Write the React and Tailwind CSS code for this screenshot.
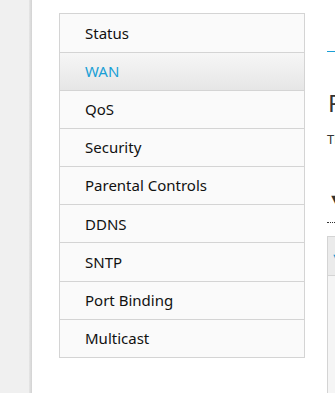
const menuItems = [
  "Status",
  "WAN",
  "QoS",
  "Security",
  "Parental Controls",
  "DDNS",
  "SNTP",
  "Port Binding",
  "Multicast",
];

const App = () => {
  const active = "WAN";

  return (
    <div
      className="flex h-[393px] w-[335px] overflow-hidden bg-[#f0f0f0]"
      style={{ fontFamily: '"Noto Sans", "Open Sans", sans-serif' }}
    >
      {/* left rail */}
      <div className="w-[29px] shrink-0 bg-[#f0f0f0]" />
      <div className="w-[3px] shrink-0 bg-gradient-to-r from-[#e6e6e6] to-[#d2d2d2]" />

      {/* main panel */}
      <div className="flex flex-1 min-w-0 bg-white pl-[27px] pt-[13px] gap-[22px]">
        {/* side menu */}
        <div className="w-[246px] shrink-0 self-start border border-[#d4d4d4]">
          {menuItems.map((item, i) => (
            <div
              key={item}
              className={`flex items-center pl-[25px] text-[15px] ${
                i > 0 ? "h-[38.2px] border-t border-[#d4d4d4]" : "h-[37.5px]"
              } ${
                item === active
                  ? "bg-gradient-to-b from-[#f6f6f6] to-[#e6e6e6] text-[#1a9fd6]"
                  : "bg-[#fafafa] text-[#111]"
              }`}
            >
              {item}
            </div>
          ))}
        </div>

        {/* content (clipped by window) */}
        <div className="w-[300px] shrink-0 flex flex-col">
          <div className="mt-[38px] h-px w-full bg-[#1a9fd6]" />
          <h2 className="mt-[36px] pl-[1px] text-[24px] leading-[30px] text-[#333]">PPPoE</h2>
          <p className="mt-[12px] text-[13px] leading-[18px] text-[#333]">The WAN settings</p>
          <div className="mt-[40px] flex items-center gap-2 text-[#333]">
            <span className="pl-[1px] text-[16px] leading-[20px]">▼</span>
            <span className="text-[14px]">WAN List</span>
          </div>
          <div className="mt-[13px] border-b border-dotted border-[#333]" />
          <div className="mt-[13px] flex-1 border-l border-t border-[#d4d4d4] bg-[#f5f5f5]">
            <div className="flex h-[39px] items-center border-b border-[#d4d4d4] bg-[#ebebeb] pl-[3px]">
              <span className="text-[11px] leading-none text-[#1a9fd6]">▼</span>
            </div>
          </div>
        </div>
      </div>
    </div>
  );
};

export default App;
